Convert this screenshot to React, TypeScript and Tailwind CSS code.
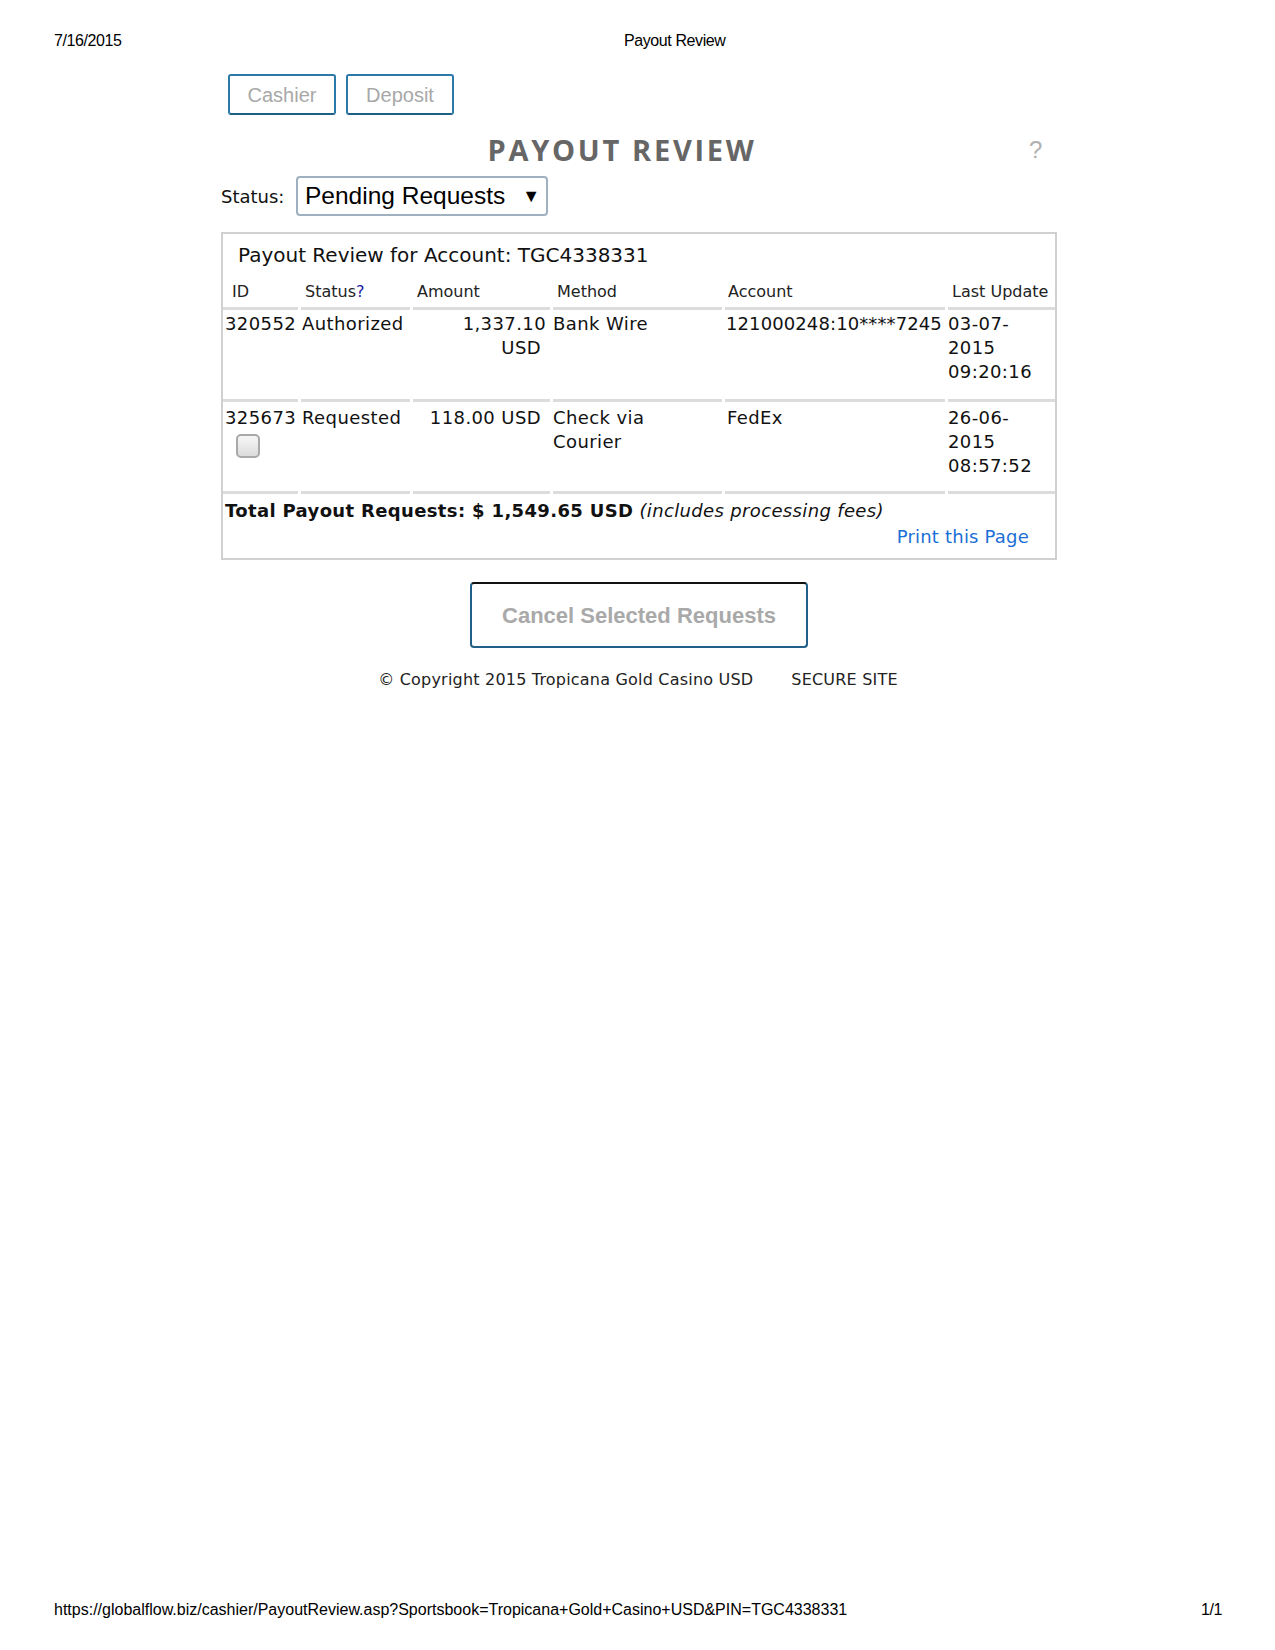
import React from "react";

const dv = { fontFamily: '"DejaVu Sans", sans-serif' };
const ar = { fontFamily: '"Liberation Sans", Arial, sans-serif' };

function HeadCell({ children, className = "" }: { children: React.ReactNode; className?: string }) {
  return (
    <div className={`border-b-[3px] border-[#dcdcdc] pb-[5px] text-[16px] leading-[20px] text-[#222] ${className}`}>
      {children}
    </div>
  );
}

function Cell({ children, className = "" }: { children: React.ReactNode; className?: string }) {
  return (
    <div className={`border-b-[3px] border-[#dcdcdc] text-[18px] leading-[24px] text-[#111] ${className}`}>
      {children}
    </div>
  );
}

export default function App() {
  return (
    <div className="relative flex h-[1650px] w-[1275px] flex-col bg-white">
      {/* print header */}
      <div className="flex pt-[32px] text-[16px] leading-[18px] tracking-[-0.4px] text-black" style={ar}>
        <div className="ml-[54px] w-[570px]">7/16/2015</div>
        <div>Payout Review</div>
      </div>

      <div className="ml-[221px] flex w-[836px] flex-col" style={dv}>
        {/* nav buttons */}
        <div className="mt-[24px] flex gap-[10px] pl-[7px]">
          <div
            className="flex h-[41px] w-[108px] items-center justify-center rounded-[3px] border-2 border-[#2a79a6] border-b-[#1d5f85] text-[20px] text-[#a8a8a8]"
            style={ar}
          >
            Cashier
          </div>
          <div
            className="flex h-[41px] w-[108px] items-center justify-center rounded-[3px] border-2 border-[#2a79a6] border-b-[#1d5f85] text-[20px] text-[#a8a8a8]"
            style={ar}
          >
            Deposit
          </div>
        </div>

        {/* heading */}
        <div className="mt-[17px] flex items-center">
          <div
            className="flex-1 pl-[6px] text-center text-[29px] font-bold leading-[36px] tracking-[2.7px] text-[#666]"
            style={{ fontFamily: '"Open Sans", sans-serif' }}
          >
            PAYOUT REVIEW
          </div>
          <div className="w-[40px] pl-[12px] text-[24px] leading-[36px] text-[#b0b0b0]" style={ar}>
            ?
          </div>
        </div>

        {/* status select */}
        <div className="mt-[8px] flex items-center">
          <div className="w-[75px] text-[18px] text-[#111]">Status:</div>
          <div
            className="flex h-[40px] w-[252px] items-center justify-between rounded-[4px] border-2 border-[#9fb0c0] pl-[7px] pr-[6px] text-[24.5px] text-black"
            style={ar}
          >
            <span>Pending Requests</span>
            <span className="text-[18px] leading-none">▼</span>
          </div>
        </div>

        {/* table box */}
        <div className="mt-[16px] border-2 border-[#d0d0d0]">
          <div className="pl-[15px] pt-[7px] text-[20px] leading-[28px] text-[#111]">
            Payout Review for Account: TGC4338331
          </div>
          <div className="mt-[13px] grid grid-cols-[75px_109px_137px_169px_220px_107px] gap-x-[3px]">
            <HeadCell className="pl-[9px]">ID</HeadCell>
            <HeadCell className="pl-[4px]">
              Status<span className="text-[#1a1aa6]">?</span>
            </HeadCell>
            <HeadCell className="pl-[4px]">Amount</HeadCell>
            <HeadCell className="pl-[4px]">Method</HeadCell>
            <HeadCell className="pl-[3px]">Account</HeadCell>
            <HeadCell className="pl-[4px]">Last Update</HeadCell>

            <Cell className="pb-[15px] pl-[2px] pt-[2px] tracking-[0.4px]">320552</Cell>
            <Cell className="pb-[15px] pl-[1px] pt-[2px] tracking-[0.4px]">Authorized</Cell>
            <Cell className="pb-[15px] pr-[4px] pt-[2px] text-right tracking-[0.4px]">
              1,337.10
              <br />
              <span className="mr-[5px]">USD</span>
            </Cell>
            <Cell className="pb-[15px] pt-[2px] tracking-[0.4px]">Bank Wire</Cell>
            <Cell className="whitespace-nowrap pb-[15px] pl-[1px] pt-[2px] tracking-[0.1px]">
              121000248:10****7245
            </Cell>
            <Cell className="pb-[15px] pt-[2px] tracking-[0.4px]">
              03-07-
              <br />
              2015
              <br />
              09:20:16
            </Cell>

            <Cell className="pb-[13px] pl-[2px] pt-[4px] tracking-[0.4px]">
              325673
              <div className="ml-[11px] mt-[4px] h-[24px] w-[24px] rounded-[5px] border-2 border-[#a9a9a9] bg-gradient-to-b from-[#f7f7f7] to-[#dcdcdc]" />
            </Cell>
            <Cell className="pb-[13px] pl-[1px] pt-[4px] tracking-[0.4px]">Requested</Cell>
            <Cell className="pb-[13px] pr-[9px] pt-[4px] text-right tracking-[0.4px]">118.00 USD</Cell>
            <Cell className="pb-[13px] pt-[4px] tracking-[0.4px]">
              Check via
              <br />
              Courier
            </Cell>
            <Cell className="pb-[13px] pl-[2px] pt-[4px] tracking-[0.4px]">FedEx</Cell>
            <Cell className="pb-[13px] pt-[4px] tracking-[0.4px]">
              26-06-
              <br />
              2015
              <br />
              08:57:52
            </Cell>
          </div>
          <div className="pl-[2px] pt-[5px] text-[18px] leading-[24px] tracking-[0.35px] text-[#111]">
            <span className="font-bold">Total Payout Requests: $ 1,549.65 USD</span>{" "}
            <span className="italic">(includes processing fees)</span>
          </div>
          <div className="pb-[8px] pr-[26px] pt-[1px] text-right text-[18px] leading-[26px] tracking-[0.2px] text-[#1a6fd6]">
            Print this Page
          </div>
        </div>

        {/* cancel button */}
        <div className="mt-[22px] flex justify-center">
          <div
            className="flex h-[66px] w-[338px] items-center justify-center rounded-[4px] border-2 border-[#1f5f88] border-t-[#111] text-[22px] font-bold text-[#a9a9a9]"
            style={ar}
          >
            Cancel Selected Requests
          </div>
        </div>

        {/* copyright */}
        <div className="mt-[21px] flex justify-center pr-[2px] text-[16px] leading-[22px] tracking-[0.2px] text-[#222]">
          <span>© Copyright 2015 Tropicana Gold Casino USD</span>
          <span className="ml-[38px]">SECURE SITE</span>
        </div>
      </div>

      {/* print footer */}
      <div className="mt-auto flex items-center justify-between pb-[31px] pl-[54px] pr-[53px] text-[16px] leading-[18px] text-black" style={ar}>
        <span>https://globalflow.biz/cashier/PayoutReview.asp?Sportsbook=Tropicana+Gold+Casino+USD&amp;PIN=TGC4338331</span>
        <span className="tracking-[-0.4px]">1/1</span>
      </div>
    </div>
  );
}
